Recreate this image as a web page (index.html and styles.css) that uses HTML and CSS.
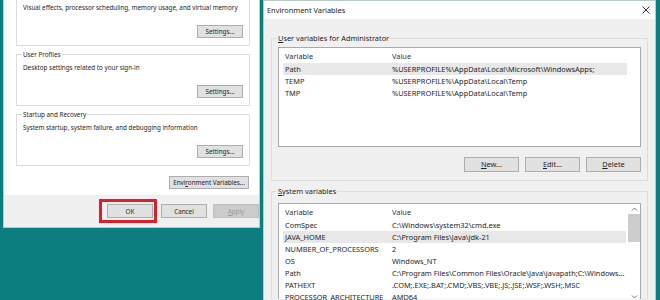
FILE: index.html
```html
<!DOCTYPE html>
<html lang="en">
<head>
	<meta charset="UTF-8">
	<title>Environment Variables</title>
	<link rel="stylesheet" href="styles.css">
</head>
<body>
	<main class="desk">
		<section class="win props">
			<div class="props-body">
				<fieldset class="group perf">
					<p class="desc">Visual effects, processor scheduling, memory usage, and virtual memory</p>
					<div class="row-end"><button class="btn">Settings...</button></div>
				</fieldset>
				<fieldset class="group">
					<legend>User Profiles</legend>
					<p class="desc">Desktop settings related to your sign-in</p>
					<div class="row-end"><button class="btn">Settings...</button></div>
				</fieldset>
				<fieldset class="group">
					<legend>Startup and Recovery</legend>
					<p class="desc">System startup, system failure, and debugging information</p>
					<div class="row-end"><button class="btn">Settings...</button></div>
				</fieldset>
				<div class="row-end env"><button class="btn wide">Envi<u>r</u>onment Variables...</button></div>
			</div>
			<footer class="dlg-foot">
				<span class="mark"><button class="btn">OK</button></span>
				<button class="btn">Cancel</button>
				<button class="btn" disabled><u>A</u>pply</button>
			</footer>
		</section>

		<section class="win env-win">
			<header class="title">
				<span>Environment Variables</span>
				<svg class="close" width="8" height="8" viewBox="0 0 8 8"><path d="M0.5 0.5L7.5 7.5M7.5 0.5L0.5 7.5" stroke="#333" stroke-width="1"/></svg>
			</header>
			<div class="env-body">
				<fieldset class="group user">
					<legend><u>U</u>ser variables for Administrator</legend>
					<div class="list short">
						<div class="rows">
							<div class="vrow head"><span>Variable</span><span>Value</span></div>
							<div class="vrow sel"><span>Path</span><span>%USERPROFILE%\AppData\Local\Microsoft\WindowsApps;</span></div>
							<div class="vrow"><span>TEMP</span><span>%USERPROFILE%\AppData\Local\Temp</span></div>
							<div class="vrow"><span>TMP</span><span>%USERPROFILE%\AppData\Local\Temp</span></div>
						</div>
					</div>
					<div class="row-end tools">
						<button class="btn big"><u>N</u>ew...</button>
						<button class="btn big"><u>E</u>dit...</button>
						<button class="btn big"><u>D</u>elete</button>
					</div>
				</fieldset>
				<fieldset class="group sys">
					<legend><u>S</u>ystem variables</legend>
					<div class="list tall">
						<div class="rows">
							<div class="vrow head"><span>Variable</span><span>Value</span></div>
							<div class="vrow"><span>ComSpec</span><span>C:\Windows\system32\cmd.exe</span></div>
							<div class="vrow sel"><span>JAVA_HOME</span><span>C:\Program Files\Java\jdk-21</span></div>
							<div class="vrow"><span>NUMBER_OF_PROCESSORS</span><span>2</span></div>
							<div class="vrow"><span>OS</span><span>Windows_NT</span></div>
							<div class="vrow"><span>Path</span><span>C:\Program Files\Common Files\Oracle\Java\javapath;C:\Windows...</span></div>
							<div class="vrow"><span>PATHEXT</span><span>.COM;.EXE;.BAT;.CMD;.VBS;.VBE;.JS;.JSE;.WSF;.WSH;.MSC</span></div>
							<div class="vrow"><span>PROCESSOR_ARCHITECTURE</span><span>AMD64</span></div>
						</div>
						<div class="scroll">
							<svg width="7" height="5" viewBox="0 0 7 5"><path d="M1 3.5L3.5 1L6 3.5" fill="none" stroke="#777" stroke-width="1"/></svg>
							<div class="thumb"></div>
							<div class="track"></div>
							<svg width="7" height="5" viewBox="0 0 7 5"><path d="M1 1.5L3.5 4L6 1.5" fill="none" stroke="#777" stroke-width="1"/></svg>
						</div>
					</div>
				</fieldset>
			</div>
		</section>
	</main>
</body>
</html>
```

FILE: styles.css
```css
html, body {
	margin: 0;
	height: 100%;
	overflow: hidden;
}
body {
	background-color: #0c7e80;
	color: #1e1e1e;
	font-family: "Noto Sans", "Open Sans", sans-serif;
}
main.desk {
	display: flex;
	align-items: flex-start;
	height: 300px;
	overflow: hidden;
}
section.win {
	border: 1px solid #b9c9cc;
	box-sizing: border-box;
}
/* system properties */
section.props {
	background: #fff;
	margin: -20px 0 0 3px;
	width: 257px;
	font-size: 6.3px;
	line-height: 9px;
}
section.props .props-body {
	padding: 12px 9px 0 12px;
	height: 202px;
}
fieldset.group {
	border: 1px solid #dcdcdc;
	margin: 0;
	min-width: 0;
	padding: 4px 6px 7px 6px;
}
fieldset.group legend {
	padding: 0 1px;
	margin-left: -1px;
}
section.props fieldset.group + fieldset.group {
	margin-top: 4px;
}
section.props fieldset.perf {
	padding-top: 9px;
}
p.desc {
	margin: 0;
	white-space: nowrap;
}
.row-end {
	display: flex;
	justify-content: flex-end;
}
section.props fieldset .row-end {
	margin-top: 13px;
}
.btn {
	background: #e1e1e1;
	border: 1px solid #adadad;
	color: #1e1e1e;
	font: inherit;
	height: 13px;
	line-height: 11px;
	padding: 0;
	width: 46px;
	white-space: nowrap;
}
.btn:disabled {
	background: #cccccc;
	border-color: #bfbfbf;
	color: #9a9a9a;
}
.btn.wide {
	width: 80px;
}
.row-end.env {
	margin: 10px 1px 0 0;
}
footer.dlg-foot {
	background: #f0f0f0;
	display: flex;
	align-items: center;
	justify-content: flex-end;
	gap: 6px;
	height: 32px;
}
footer.dlg-foot .btn {
	height: 14px;
}
footer.dlg-foot .mark {
	border: 3px solid #d9202c;
	display: flex;
	padding: 2px 1px 2px 5px;
	margin-right: -2px;
}

/* environment variables */
section.env-win {
	background: #f0f0f0;
	border-bottom: none;
	margin-left: 3px;
	width: 393px;
	height: 300px;
	overflow: hidden;
	font-size: 7.4px;
	line-height: 9px;
}
header.title {
	background: #fff;
	display: flex;
	align-items: center;
	justify-content: space-between;
	height: 18px;
	padding: 0 5px 0 3px;
}
section.env-win .env-body {
	padding: 15px 7px 0 7px;
}
fieldset.user {
	padding: 4px 6px 8px 6px;
}
fieldset.sys {
	margin-top: 6px;
	padding: 7px 6px 0 6px;
	border-bottom: none;
}
.list {
	background: #fff;
	border: 1px solid #a9a9a9;
	display: flex;
	box-sizing: border-box;
}
.list.short {
	height: 100px;
}
.list.tall {
	height: 96px;
	border-bottom: none;
}
.list .rows {
	flex: 1;
	padding: 2px 13px 0 4px;
}
.list.tall .rows {
	padding-right: 2px;
}
.vrow {
	display: grid;
	grid-template-columns: 107px 1fr;
	height: 12px;
	line-height: 12px;
	padding-left: 2px;
	white-space: nowrap;
}
.vrow.head {
	margin-bottom: 1px;
	color: #333;
}
.vrow.sel {
	background: #e8e8e8;
}
.scroll {
	width: 12px;
	display: flex;
	flex-direction: column;
	align-items: center;
	padding-top: 3px;
}
.scroll .thumb {
	background: #cdcdcd;
	width: 100%;
	height: 28px;
	margin-top: 2px;
}
.scroll .track {
	flex: 1;
}
.row-end.tools {
	gap: 6px;
	margin-top: 10px;
}
.btn.big {
	width: 55px;
	height: 15px;
}
```
